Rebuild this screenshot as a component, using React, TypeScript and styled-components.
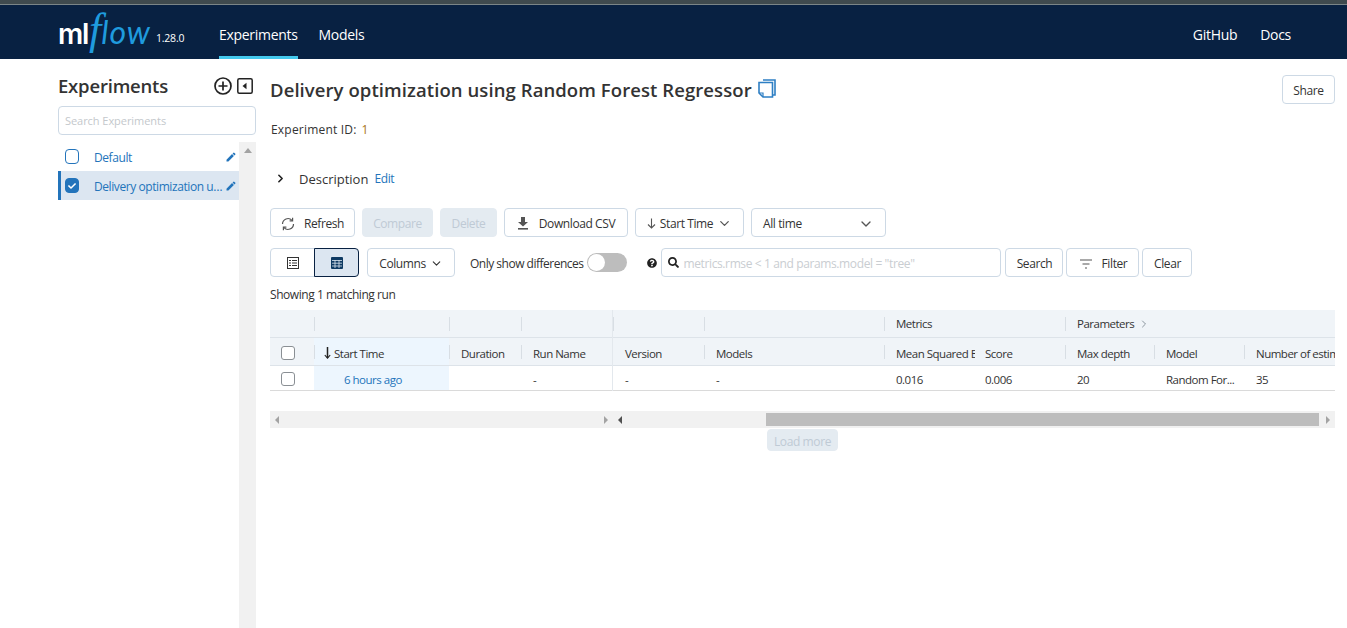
import React from "react";
import styled, { createGlobalStyle } from "styled-components";
import { MdEdit } from "react-icons/md";
import { FaQuestionCircle, FaSearch, FaCheck } from "react-icons/fa";
import { FiChevronDown, FiChevronRight } from "react-icons/fi";

const Global = createGlobalStyle`
  html, body { margin: 0; padding: 0; height: 628px; overflow: hidden; background: #fff; }
  body { font-family: "Open Sans", "Noto Sans", sans-serif; font-size: 12px; color: #333; }
  * { box-sizing: border-box; }
`;

const Strip = styled.div`height: 5px; background: #3f4a4e; border-bottom: 1px solid #7b8587;`;
const Nav = styled.header`height: 54px; background: #082142; padding: 0 56px 0 58px; display: flex; align-items: stretch; color: #fff;`;
const Logo = styled.div`display: flex; align-items: baseline; width: 161px; padding-top: 7px; font-family: "Liberation Sans", sans-serif; overflow: hidden;`;
const LogoMl = styled.span`font-size: 28px; line-height: 36px; font-family: "Inter", sans-serif; font-weight: 600; letter-spacing: -1.3px;`;
const LogoF = styled.span`font-size: 44px; line-height: 36px; font-style: italic; color: #1f9bde; font-family: "Liberation Serif", serif; margin-left: 1px;`;
const LogoFlow = styled.span`font-size: 32px; line-height: 36px; font-style: italic; color: #1f9bde; font-family: "Lato", sans-serif; letter-spacing: 1px; margin-left: 0;`;
const LogoVer = styled.span`font-size: 10.5px; margin-left: 5px; font-family: "Open Sans", sans-serif; letter-spacing: -0.2px; position: relative; top: -2px;`;
const NavLink = styled.a<{ $active?: boolean; $gap?: number }>`
  font-size: 14px; height: 54px; padding-top: 9px; margin-right: ${p => p.$gap ?? 21}px; color: #fff;
  border-bottom: 3px solid ${p => (p.$active ? "#43c9ed" : "transparent")}; letter-spacing: -0.3px;
  display: flex; align-items: center; line-height: 1;
`;
const Spacer = styled.div`flex: 1;`;

const Body = styled.div`display: flex; height: 569px; padding-left: 58px;`;
const Sidebar = styled.aside`width: 198px; display: flex; flex-direction: column;`;
const SideHead = styled.div`height: 47px; display: flex; align-items: center; justify-content: space-between; padding: 6px 3px 0 0;`;
const SideTitle = styled.h1`margin: 0; font-size: 18.5px; font-weight: 600; color: #333; letter-spacing: -0.2px;`;
const SideIcons = styled.div`display: flex; align-items: center; gap: 5px;`;
const SearchBox = styled.input`
  height: 29px; width: 198px; border: 1px solid #cdd9e5; border-radius: 4px; padding: 0 6px; font: 11px "Open Sans", sans-serif; letter-spacing: -0.05px; outline: none;
  &::placeholder { color: #c4c8cc; opacity: 1; }
`;
const SideList = styled.div`flex: 1; margin-top: 7px; display: flex;`;
const Rows = styled.div`width: 181px;`;
const VBar = styled.div`width: 17px; background: #f1f1f1; display: flex; justify-content: center; padding-top: 6px;`;
const Tri = styled.div<{ $dir: "up" | "left" | "right"; $c?: string }>`
  width: 0; height: 0; border-style: solid;
  ${p => p.$dir === "up" && `border-width: 0 4px 5px 4px; border-color: transparent transparent ${p.$c ?? "#a3a3a3"} transparent;`}
  ${p => p.$dir === "left" && `border-width: 4px 4px 4px 0; border-color: transparent ${p.$c ?? "#a3a3a3"} transparent transparent;`}
  ${p => p.$dir === "right" && `border-width: 4px 0 4px 4px; border-color: transparent transparent transparent ${p.$c ?? "#a3a3a3"};`}
`;
const SideRow = styled.div<{ $active?: boolean }>`
  height: 29px; display: flex; align-items: center; padding-left: ${p => (p.$active ? 4 : 7)}px; padding-right: 2px;
  background: ${p => (p.$active ? "#dce6f1" : "transparent")}; border-left: ${p => (p.$active ? "3px solid #2374bb" : "none")};
  color: #2374bb; font-size: 12px; letter-spacing: -0.42px;
`;
const SideCheck = styled.span<{ $on?: boolean }>`
  width: 14px; height: 15px; border-radius: 4px; border: 1px solid #2374bb; background: ${p => (p.$on ? "#2374bb" : "#fff")};
  color: #fff; display: flex; align-items: center; justify-content: center; margin-right: 15px; flex: none;
`;
const SideName = styled.span`flex: 1; min-width: 0; padding-top: 1px; white-space: nowrap; overflow: hidden; text-overflow: ellipsis;`;

const Main = styled.main`width: 1065px; margin-left: 14px;`;
const TitleRow = styled.div`display: flex; align-items: flex-start; justify-content: space-between; height: 57px; padding-top: 16px;`;
const TitleWrap = styled.div`display: flex; align-items: center; gap: 6px; height: 28px;`;
const Title = styled.h2`margin: 0; font-size: 18.5px; font-weight: 600; color: #333; letter-spacing: 0.08px; white-space: nowrap;`;
const Btn = styled.button<{ $w?: number; $disabled?: boolean; $h?: number; $spread?: boolean }>`
  height: ${p => p.$h ?? 29}px; ${p => (p.$w ? `width: ${p.$w}px;` : "")} padding: 2px ${p => (p.$spread ? 11 : 0)}px 0; display: inline-flex; align-items: center;
  justify-content: ${p => (p.$spread ? "space-between" : "center")};
  border: 1px solid ${p => (p.$disabled ? "#e4ebf1" : "#cdd9e5")}; border-radius: 4px;
  background: ${p => (p.$disabled ? "#e4ebf1" : "#fff")}; color: ${p => (p.$disabled ? "#bfcad5" : "#333")};
  font: 12px "Open Sans", sans-serif; letter-spacing: -0.4px; flex: none; white-space: nowrap;
`;
const IdRow = styled.div`height: 26px; font-size: 12px; padding-left: 1px; display: flex; align-items: center; letter-spacing: 0.2px;`;
const IdValue = styled.span`margin-left: 5px; color: #a8741a;`;
const DescRow = styled.div`height: 29px; margin-top: 22px; padding-left: 4px; display: flex; align-items: center; font-size: 13px; color: #333; letter-spacing: 0;`;
const DescLabel = styled.span`margin-left: 12px;`;
const DescEdit = styled.span`margin-left: 6px; color: #2374bb; font-size: 12px; letter-spacing: -0.4px;`;
const Toolbar = styled.div`display: flex; align-items: center; height: 29px;`;
const Toolbar1 = styled(Toolbar)`margin-top: 15px; gap: 7px;`;
const Toolbar2 = styled(Toolbar)`margin-top: 11px;`;
const IconGap = styled.span<{ $m: number }>`display: inline-flex; margin-right: ${p => p.$m}px;`;
const Seg = styled.div`display: flex; width: 89px; flex: none;`;
const SegBtn = styled.button<{ $on?: boolean }>`
  width: 45px; height: 29px; padding: 0; display: flex; align-items: center; justify-content: center;
  background: ${p => (p.$on ? "#dce6f1" : "#fff")}; border: 1px solid ${p => (p.$on ? "#082142" : "#cdd9e5")};
  border-radius: ${p => (p.$on ? "0 4px 4px 0" : "4px 0 0 4px")}; ${p => (p.$on ? "margin-left: -1px;" : "")}
`;
const ColumnsBtn = styled(Btn)`margin-left: 8px;`;
const DiffLabel = styled.span`margin-left: 15px; padding-top: 1px; font-size: 12px; letter-spacing: -0.5px;`;
const Toggle = styled.span`margin-left: 4px; width: 40px; height: 19px; background: #bdbdbd; border-radius: 10px; display: flex; align-items: center; padding-left: 1px;`;
const Knob = styled.span`width: 17px; height: 17px; border-radius: 50%; background: #fff;`;
const HelpIcon = styled.span`margin: 0 4px 0 20px; display: inline-flex; color: #222;`;
const SearchField = styled.div`width: 340px; height: 29px; border: 1px solid #cdd9e5; border-radius: 4px; display: flex; align-items: center; padding-left: 6px; color: #222;`;
const SearchInner = styled.input`
  flex: 1; min-width: 0; margin-left: 4px; border: none; outline: none; padding: 1px 0 0; font: 12px "Open Sans", sans-serif; letter-spacing: -0.38px;
  &::placeholder { color: #c9cdd1; opacity: 1; }
`;
const SearchBtn = styled(Btn)`margin-left: 4px;`;
const TailBtn = styled(Btn)`margin-left: 3px;`;
const Showing = styled.div`height: 33px; padding-top: 2px; display: flex; align-items: center; font-size: 12px; letter-spacing: -0.45px; color: #333;`;

const TableWrap = styled.div`display: flex; width: 1065px; height: 81px;`;
const Pane = styled.div<{ $w: number; $cols: string; $left?: boolean }>`
  width: ${p => p.$w}px; flex: none; display: grid; grid-template-columns: ${p => p.$cols}; grid-template-rows: 28px 28px 25px; overflow: hidden;
  ${p => (p.$left ? "border-right: 1px solid #e3e8ed;" : "")}
`;
const HCell = styled.div<{ $sorted?: boolean; $sep?: boolean; $top?: boolean; $span?: number; $pad?: number }>`
  position: relative; display: flex; align-items: center; padding: ${p => (p.$top ? 0 : 3)}px 0 0 ${p => p.$pad ?? 12}px; white-space: nowrap; overflow: hidden;
  ${p => (p.$span ? `grid-column: span ${p.$span};` : "")}
  background: ${p => (p.$sorted ? "#edf6fe" : "#f0f4f8")}; font-size: 11.5px; letter-spacing: -0.5px; color: #333;
  border-bottom: 1px solid #dde3e9;
  &::before { content: ""; display: ${p => (p.$sep === false ? "none" : "block")}; position: absolute; left: 0; top: 7px; height: 14px; width: 1px; background: #d8dee4; }
`;
const DCell = styled.div<{ $sorted?: boolean; $pad?: number }>`
  display: flex; align-items: center; padding: 2px 0 0 ${p => p.$pad ?? 12}px; white-space: nowrap; overflow: hidden; font-size: 11.5px; letter-spacing: -0.5px; color: #333;
  border-bottom: 1px solid #dadada; background: ${p => (p.$sorted ? "#edf6fe" : "#fff")};
`;
const GridCheck = styled.span`width: 14px; height: 14px; border: 1px solid #8a8f94; border-radius: 3px; background: #fff; display: block;`;
const RunLink = styled.span`margin-left: 18px; color: #2374bb;`;
const SortArrow = styled.span`display: inline-flex; margin: 0 3px 0 -2px;`;
const Chevron = styled.span`display: inline-flex; margin-left: 4px; color: #8b959e;`;

const HBarRow = styled.div`display: flex; width: 1065px; height: 17px; margin-top: 20px; background: #f1f1f1;`;
const HBar = styled.div<{ $w: number; $spread?: boolean }>`width: ${p => p.$w}px; flex: none; display: flex; align-items: center; padding: 0 5px; ${p => (p.$spread ? "justify-content: space-between;" : "")}`;
const Thumb = styled.div`flex: 1; height: 13px; background: #bdbdbd; margin: 0 7px 0 144px;`;
const LoadRow = styled.div`display: flex; justify-content: center; margin-top: 1px;`;

const Plus = () => (
  <svg width="18" height="18" viewBox="0 0 18 18" fill="none" stroke="#222" strokeWidth="1.7">
    <circle cx="9" cy="9" r="8" /><path d="M9 4.5v9M4.5 9h9" />
  </svg>
);
const Collapse = () => (
  <svg width="16" height="16" viewBox="0 0 16 16"><rect x=".8" y=".8" width="14.4" height="14.4" rx="1.5" fill="none" stroke="#222" strokeWidth="1.5" /><path d="M9.5 4.8v6.4L5.5 8z" fill="#222" /></svg>
);
const Copy = () => (
  <svg width="18" height="20" viewBox="0 0 18 20" fill="none" stroke="#2e7fc4" strokeWidth="1.6">
    <path d="M5 1h12v15h-2" />
    <path d="M1 3.5h13.5V18H5l-4-4z" fill="#fff" />
    <path d="M1 14h4v4" strokeWidth="1.2" />
  </svg>
);
const Refresh = () => (
  <svg width="14" height="14" viewBox="0 0 14 14" fill="none" stroke="#555" strokeWidth="1.2">
    <path d="M1.5 7A5.5 5.5 0 0 1 11 3.3" /><path d="M12.5 7A5.5 5.5 0 0 1 3 10.7" />
    <path d="M11.6 .8v3h-3M2.4 13.2v-3h3" />
  </svg>
);
const Download = () => (
  <svg width="12" height="13" viewBox="0 0 12 13" fill="#555">
    <path d="M4 0h4v5h3L6 9.5 1 5h3z" /><rect x="1" y="11" width="10" height="1.6" />
  </svg>
);
const ArrowDown = () => (
  <svg width="9" height="11" viewBox="0 0 9 11" fill="none" stroke="#555" strokeWidth="1.1"><path d="M4.5 .5v9.5M1 6.5L4.5 10 8 6.5" /></svg>
);
const SortDown = () => (
  <svg width="7" height="12" viewBox="0 0 7 12" fill="none" stroke="#222" strokeWidth="1.5"><path d="M3.5 0v11" /><path d="M.8 8L3.5 11.2 6.2 8" strokeWidth="1.1" /></svg>
);
const ListIcon = () => (
  <svg width="12" height="12" viewBox="0 0 12 12" fill="none" stroke="#333" strokeWidth="1">
    <rect x=".5" y=".5" width="11" height="11" /><path d="M2 3.5h2M5 3.5h5M2 6h2M5 6h5M2 8.5h2M5 8.5h5" />
  </svg>
);
const GridIcon = () => (
  <svg width="12" height="12" viewBox="0 0 12 12"><rect width="12" height="12" rx="1" fill="#0e3a63" />
    <path d="M1 3.5h10M1 6.2h10M1 9h10M4 3v8M8 3v8" stroke="#dce6f1" strokeWidth=".8" /></svg>
);
const FilterIcon = () => (
  <svg width="14" height="10" viewBox="0 0 14 10" fill="none" stroke="#555" strokeWidth="1.2"><path d="M1 1h12M3.5 5h7M6 9h2" /></svg>
);

export default function App() {
  return (
    <>
      <Global />
      <Strip />
      <Nav>
        <Logo>
          <LogoMl>ml</LogoMl><LogoF>f</LogoF><LogoFlow>low</LogoFlow><LogoVer>1.28.0</LogoVer>
        </Logo>
        <NavLink $active>Experiments</NavLink>
        <NavLink>Models</NavLink>
        <Spacer />
        <NavLink $gap={23}>GitHub</NavLink>
        <NavLink $gap={0}>Docs</NavLink>
      </Nav>
      <Body>
        <Sidebar>
          <SideHead>
            <SideTitle>Experiments</SideTitle>
            <SideIcons><Plus /><Collapse /></SideIcons>
          </SideHead>
          <SearchBox placeholder="Search Experiments" />
          <SideList>
            <Rows>
              <SideRow>
                <SideCheck /><SideName>Default</SideName><MdEdit size={12} />
              </SideRow>
              <SideRow $active>
                <SideCheck $on><FaCheck size={8} /></SideCheck>
                <SideName>Delivery optimization using Random Forest Regressor</SideName><MdEdit size={12} />
              </SideRow>
            </Rows>
            <VBar><Tri $dir="up" /></VBar>
          </SideList>
        </Sidebar>
        <Main>
          <TitleRow>
            <TitleWrap>
              <Title>Delivery optimization using Random Forest Regressor</Title>
              <Copy />
            </TitleWrap>
            <Btn $w={53}>Share</Btn>
          </TitleRow>
          <IdRow>Experiment ID:<IdValue>1</IdValue></IdRow>
          <DescRow>
            <FiChevronRight size={13} strokeWidth={3} color="#222" />
            <DescLabel>Description</DescLabel>
            <DescEdit>Edit</DescEdit>
          </DescRow>
          <Toolbar1>
            <Btn $w={85}><IconGap $m={9}><Refresh /></IconGap>Refresh</Btn>
            <Btn $w={71} $disabled>Compare</Btn>
            <Btn $w={57} $disabled>Delete</Btn>
            <Btn $w={124}><IconGap $m={10}><Download /></IconGap>Download CSV</Btn>
            <Btn $w={109}><IconGap $m={4}><ArrowDown /></IconGap>Start Time<Chevron><FiChevronDown size={15} color="#555" /></Chevron></Btn>
            <Btn $w={135} $spread>All time<FiChevronDown size={16} color="#555" /></Btn>
          </Toolbar1>
          <Toolbar2>
            <Seg>
              <SegBtn><ListIcon /></SegBtn>
              <SegBtn $on><GridIcon /></SegBtn>
            </Seg>
            <ColumnsBtn $w={88}>Columns<Chevron><FiChevronDown size={13} color="#333" /></Chevron></ColumnsBtn>
            <DiffLabel>Only show differences</DiffLabel>
            <Toggle><Knob /></Toggle>
            <HelpIcon><FaQuestionCircle size={10} /></HelpIcon>
            <SearchField>
              <FaSearch size={11} />
              <SearchInner placeholder={'metrics.rmse < 1 and params.model = "tree"'} />
            </SearchField>
            <SearchBtn $w={58}>Search</SearchBtn>
            <TailBtn $w={73}><IconGap $m={9}><FilterIcon /></IconGap>Filter</TailBtn>
            <TailBtn $w={50}>Clear</TailBtn>
          </Toolbar2>
          <Showing>Showing 1 matching run</Showing>
          <TableWrap>
            <Pane $w={343} $left $cols="44px 135px 72px 91px">
              <HCell $top $sep={false} />
              <HCell $top />
              <HCell $top />
              <HCell $top />
              <HCell $sep={false} $pad={11}><GridCheck /></HCell>
              <HCell $sorted><SortArrow><SortDown /></SortArrow>Start Time</HCell>
              <HCell>Duration</HCell>
              <HCell>Run Name</HCell>
              <DCell $pad={11}><GridCheck /></DCell>
              <DCell $sorted><RunLink>6 hours ago</RunLink></DCell>
              <DCell />
              <DCell>-</DCell>
            </Pane>
            <Pane $w={722} $cols="91px 180px 91px 90px 89px 90px 91px">
              <HCell $top />
              <HCell $top />
              <HCell $top $span={2}>Metrics</HCell>
              <HCell $top $span={3}>Parameters<Chevron><FiChevronRight size={12} /></Chevron></HCell>
              <HCell $sep={false}>Version</HCell>
              <HCell>Models</HCell>
              <HCell>Mean Squared Error</HCell>
              <HCell $sep={false} $pad={10}>Score</HCell>
              <HCell>Max depth</HCell>
              <HCell>Model</HCell>
              <HCell>Number of estimators</HCell>
              <DCell>-</DCell>
              <DCell>-</DCell>
              <DCell>0.016</DCell>
              <DCell $pad={10}>0.006</DCell>
              <DCell>20</DCell>
              <DCell>Random For...</DCell>
              <DCell>35</DCell>
            </Pane>
          </TableWrap>
          <HBarRow>
            <HBar $w={343} $spread><Tri $dir="left" /><Tri $dir="right" /></HBar>
            <HBar $w={722}><Tri $dir="left" $c="#505050" /><Thumb /><Tri $dir="right" /></HBar>
          </HBarRow>
          <LoadRow><Btn $w={71} $h={22} $disabled>Load more</Btn></LoadRow>
        </Main>
      </Body>
    </>
  );
}
